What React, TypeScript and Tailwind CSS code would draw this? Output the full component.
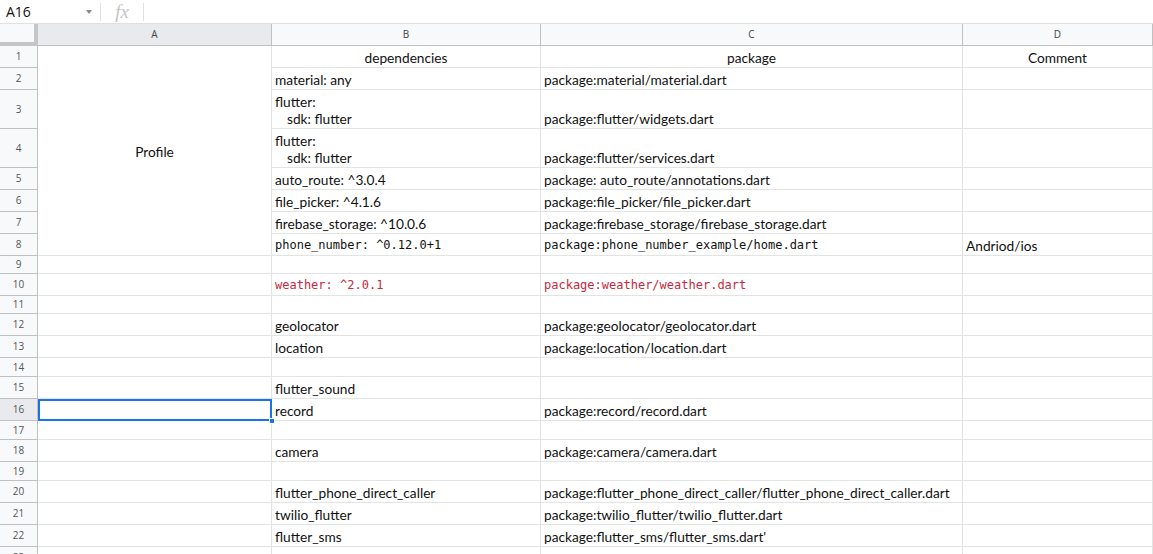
import React from "react";

type Cell = { text?: React.ReactNode; mono?: boolean; red?: boolean; center?: boolean };

const rowHeights = [22, 22, 39, 39, 22, 22, 22, 22, 18, 22, 18, 22, 22, 19, 22, 22, 19, 22, 19, 22, 22, 22, 22];

const B: Record<number, Cell> = {
  1: { text: "dependencies", center: true },
  2: { text: "material: any" },
  3: { text: (<><div>flutter:</div><div className="pl-[12px]">sdk: flutter</div></>) },
  4: { text: (<><div>flutter:</div><div className="pl-[12px]">sdk: flutter</div></>) },
  5: { text: "auto_route: ^3.0.4" },
  6: { text: "file_picker: ^4.1.6" },
  7: { text: "firebase_storage: ^10.0.6" },
  8: { text: "phone_number: ^0.12.0+1", mono: true },
  10: { text: "weather: ^2.0.1", mono: true, red: true },
  12: { text: "geolocator" },
  13: { text: "location" },
  15: { text: "flutter_sound" },
  16: { text: "record" },
  18: { text: "camera" },
  20: { text: "flutter_phone_direct_caller" },
  21: { text: "twilio_flutter" },
  22: { text: "flutter_sms" },
};

const C: Record<number, Cell> = {
  1: { text: "package", center: true },
  2: { text: "package:material/material.dart" },
  3: { text: "package:flutter/widgets.dart" },
  4: { text: "package:flutter/services.dart" },
  5: { text: "package: auto_route/annotations.dart" },
  6: { text: "package:file_picker/file_picker.dart" },
  7: { text: "package:firebase_storage/firebase_storage.dart" },
  8: { text: "package:phone_number_example/home.dart", mono: true },
  10: { text: "package:weather/weather.dart", mono: true, red: true },
  12: { text: "package:geolocator/geolocator.dart" },
  13: { text: "package:location/location.dart" },
  16: { text: "package:record/record.dart" },
  18: { text: "package:camera/camera.dart" },
  20: { text: "package:flutter_phone_direct_caller/flutter_phone_direct_caller.dart" },
  21: { text: "package:twilio_flutter/twilio_flutter.dart" },
  22: { text: "package:flutter_sms/flutter_sms.dart'" },
};

const D: Record<number, Cell> = {
  1: { text: "Comment", center: true },
  8: { text: "Andriod/ios" },
};

function DataCell({ cell, row, col }: { cell?: Cell; row: number; col: number }) {
  const c = cell || {};
  return (
    <div
      style={{ gridRow: row + 1, gridColumn: col }}
      className={
        "border-r border-b border-[#e2e3e3] flex flex-col justify-end pb-[1px] px-[3px] whitespace-nowrap overflow-visible leading-[17px] " +
        (c.center ? "items-center " : "items-start ") +
        (c.mono
          ? "font-['DejaVu_Sans_Mono',monospace] text-[12px] "
          : "font-['Lato','Open_Sans',sans-serif] text-[13.7px] ") +
        (c.red ? "text-[#c8283e]" : "text-[#111]")
      }
    >
      {c.text ? <div>{c.text}</div> : null}
    </div>
  );
}

export default function App() {
  const rows = rowHeights.map((_, i) => i + 1);
  return (
    <div className="w-[1153px] h-[554px] overflow-hidden bg-white font-['Lato',sans-serif]">
      {/* formula bar */}
      <div className="h-[24px] flex items-center border-b border-[#e1e1e1]">
        <div className="w-[100px] h-full flex items-center justify-between pl-[6px] pr-[8px]">
          <span className="text-[14px] text-[#111] font-['Open_Sans',sans-serif]">A16</span>
          <svg width="6" height="4" viewBox="0 0 6 4"><path d="M0 0h6L3 4z" fill="#8a8a8a" /></svg>
        </div>
        <div className="w-px h-[18px] bg-[#e0e0e0]" />
        <div className="w-[42px] flex items-center justify-center">
          <span className="font-['Liberation_Serif',serif] italic text-[#c4c4c4] text-[19px] leading-none">fx</span>
        </div>
        <div className="w-px h-[18px] bg-[#e0e0e0]" />
      </div>
      {/* grid */}
      <div className="grid grid-cols-[38px_234px_269px_422px_190px] grid-rows-[22px_22px_22px_39px_39px_22px_22px_22px_22px_18px_22px_18px_22px_22px_19px_22px_22px_19px_22px_19px_22px_22px_22px_22px] relative">
        {/* header row */}
        <div style={{ gridRow: 1, gridColumn: 1 }} className="bg-[#f8f9fa] border-r-[4px] border-b-[4px] border-[#c4c7c5]" />
        {["A", "B", "C", "D"].map((l, i) => (
          <div
            key={l}
            style={{ gridRow: 1, gridColumn: i + 2 }}
            className={
              "border-r border-b border-[#c0c0c0] flex items-center justify-center text-[10px] text-[#444] font-['Open_Sans',sans-serif] " +
              (l === "A" ? "bg-[#e8eaed]" : "bg-[#f8f9fa]")
            }
          >
            {l}
          </div>
        ))}
        {/* row headers */}
        {rows.map((r) => (
          <div
            key={"h" + r}
            style={{ gridRow: r + 1, gridColumn: 1 }}
            className={
              "border-r border-b border-[#c0c0c0] flex items-center justify-center text-[10px] text-[#555] font-['Open_Sans',sans-serif] " +
              (r === 16 ? "bg-[#e8eaed]" : "bg-[#f8f9fa]")
            }
          >
            {r}
          </div>
        ))}
        {/* column A merged */}
        <div
          style={{ gridRow: "2 / 10", gridColumn: 2 }}
          className="border-r border-b border-[#e2e3e3] flex items-center justify-center pt-[3px] text-[13.7px] text-[#111] font-['Lato',sans-serif]"
        >
          Profile
        </div>
        {rows.filter((r) => r > 8).map((r) => (
          <div
            key={"a" + r}
            style={{ gridRow: r + 1, gridColumn: 2 }}
            className={r === 16 ? "border-2 border-[#1a73e8] relative" : "border-r border-b border-[#e2e3e3]"}
          >
            {r === 16 && (
              <div className="absolute right-[-5px] bottom-[-5px] w-[6px] h-[6px] bg-[#1a73e8] border border-white" />
            )}
          </div>
        ))}
        {rows.map((r) => (
          <DataCell key={"b" + r} cell={B[r]} row={r} col={3} />
        ))}
        {rows.map((r) => (
          <DataCell key={"c" + r} cell={C[r]} row={r} col={4} />
        ))}
        {rows.map((r) => (
          <DataCell key={"d" + r} cell={D[r]} row={r} col={5} />
        ))}
      </div>
    </div>
  );
}
